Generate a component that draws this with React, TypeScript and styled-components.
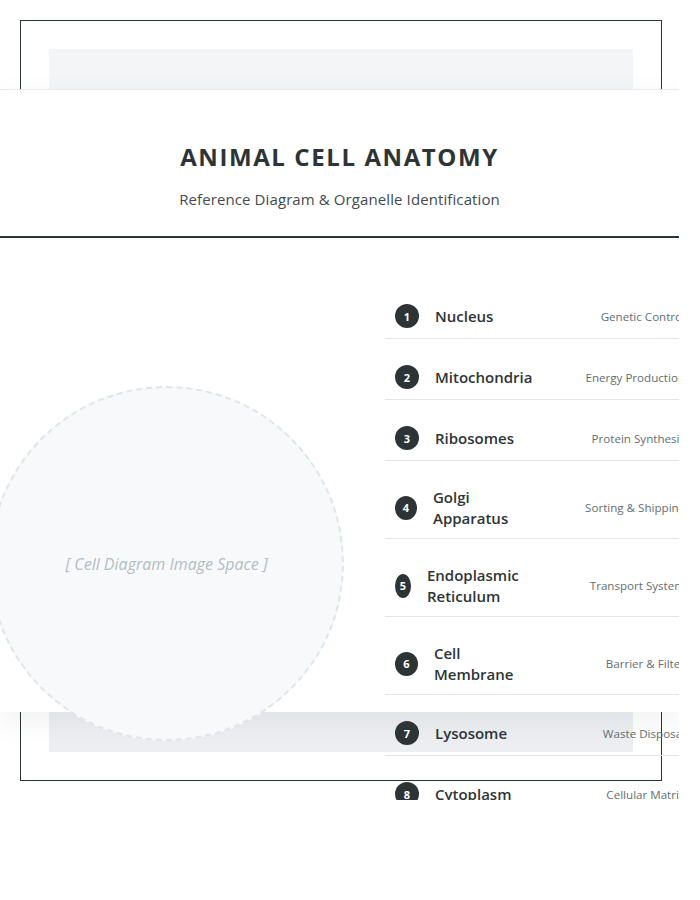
import styled, { createGlobalStyle } from "styled-components";

const GlobalStyle = createGlobalStyle`
  body {
    margin: 0;
    background: #ffffff;
    font-family: "Open Sans", "Noto Sans", sans-serif;
    color: #2d3436;
  }
`;

const Page = styled.div`
  position: relative;
  width: 679px;
  height: 800px;
  overflow: hidden;
`;

const Frame = styled.div`
  margin: 20px;
  width: 584px;
  height: 703px;
  padding: 28px;
  border: 1px solid #2d3436;
`;

const Backdrop = styled.div`
  height: 100%;
  background: linear-gradient(180deg, #f4f5f7 0%, #eceef1 100%);
`;

// the sheet sits over the framed backdrop
const Sheet = styled.section`
  position: absolute;
  top: 89px;
  left: 0;
  width: 679px;
  height: 622px;
  background: #ffffff;
  border-top: 1px solid #e6e8ea;
  box-shadow: 0 10px 30px rgba(0, 0, 0, 0.06);
`;

const Header = styled.header`
  padding: 52px 0 26px;
  text-align: center;
  border-bottom: 2px solid #2d3436;
`;

const Title = styled.h1`
  margin: 0;
  font-size: 24px;
  line-height: 29px;
  font-weight: 700;
  letter-spacing: 1.6px;
  color: #2d3436;
`;

const Subtitle = styled.p`
  margin: 18px 0 0;
  font-size: 15px;
  line-height: 21px;
  letter-spacing: 0.1px;
  color: #444b4e;
`;

const Body = styled.div`
  display: grid;
  grid-template-columns: 333px 300px;
  column-gap: 52px;
  align-items: center;
  padding-top: 56px;
`;

const DiagramSlot = styled.div`
  display: flex;
  justify-content: center;
`;

const Placeholder = styled.div`
  flex: 0 0 auto;
  width: 351px;
  height: 351px;
  border-radius: 50%;
  border: 2px dashed #dfe6e9;
  background: #f8f9fa;
  display: flex;
  align-items: center;
  justify-content: center;
  font-size: 16px;
  font-style: italic;
  color: #b2bec3;
`;

const List = styled.ol`
  margin: 0;
  padding: 0;
  list-style: none;
`;

const Item = styled.li`
  display: flex;
  align-items: center;
  gap: 16px;
  padding: 10px 0 10px 10px;
  margin-bottom: 16px;
  border-bottom: 1px solid #e3e6e8;
`;

const Badge = styled.span`
  width: 24px;
  height: 24px;
  border-radius: 50%;
  background: #2d3436;
  color: #ffffff;
  font-size: 11px;
  font-weight: 700;
  display: flex;
  align-items: center;
  justify-content: center;
`;

const Name = styled.span`
  flex: 1 1 auto;
  font-size: 15px;
  line-height: 20.5px;
  font-weight: 600;
  color: #2d3436;
`;

const Role = styled.span`
  flex: 0 0 130px;
  text-align: right;
  white-space: nowrap;
  font-size: 11.6px;
  color: #636e72;
`;

const organelles = [
  { name: "Nucleus", role: "Genetic Control" },
  { name: "Mitochondria", role: "Energy Production" },
  { name: "Ribosomes", role: "Protein Synthesis" },
  { name: "Golgi Apparatus", role: "Sorting & Shipping" },
  { name: "Endoplasmic Reticulum", role: "Transport System" },
  { name: "Cell Membrane", role: "Barrier & Filter" },
  { name: "Lysosome", role: "Waste Disposal" },
  { name: "Cytoplasm", role: "Cellular Matrix" },
];

const App = () => {
  return (
    <>
      <GlobalStyle />
      <Page>
        <Frame>
          <Backdrop />
        </Frame>
        <Sheet>
          <Header>
            <Title>ANIMAL CELL ANATOMY</Title>
            <Subtitle>Reference Diagram &amp; Organelle Identification</Subtitle>
          </Header>
          <Body>
            <DiagramSlot>
              <Placeholder>[ Cell Diagram Image Space ]</Placeholder>
            </DiagramSlot>
            <List>
              {organelles.map((o, i) => (
                <Item key={o.name}>
                  <Badge>{i + 1}</Badge>
                  <Name>{o.name}</Name>
                  <Role>{o.role}</Role>
                </Item>
              ))}
            </List>
          </Body>
        </Sheet>
      </Page>
    </>
  );
};

export default App;
